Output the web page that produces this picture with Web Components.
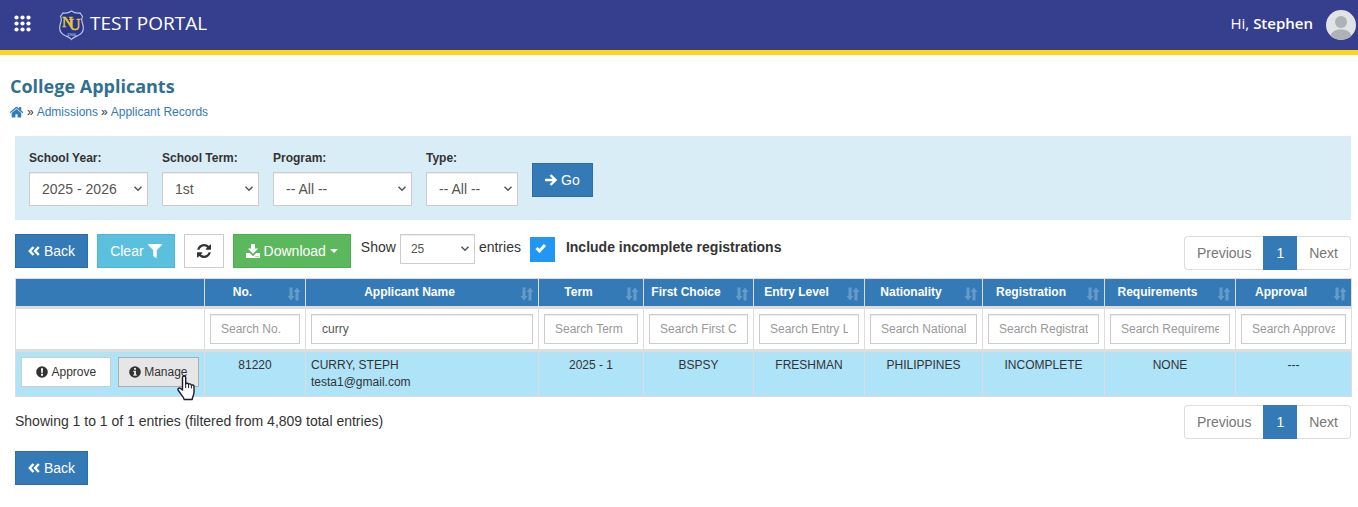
<!DOCTYPE html>
<html lang="en">
<head>
<meta charset="utf-8">
<meta name="viewport" content="width=device-width, initial-scale=1">
<title>College Applicants</title>
<style>
    body{
        margin: 0;
        background: #fff;
        color: #333;
        font-family: "Liberation Sans", Arial, sans-serif;
        font-size: 14px;
        line-height: 20px;
    }
    main{
        display: block;
        padding: 20px 7px 22px 15px;
    }
    .footer{
        display: flex;
        justify-content: space-between;
        align-items: flex-start;
        margin: 8px 0 12px;
    }
    .info{
        padding-top: 6px;
    }
</style>
</head>
<body>
<portal-header user="Stephen">TEST PORTAL</portal-header>
<main>
    <page-heading>College Applicants</page-heading>
    <filter-panel>
        <filter-field label="School Year:" options="2025 - 2026|2024 - 2025" width="119"></filter-field>
        <filter-field label="School Term:" options="1st|2nd|3rd" width="97"></filter-field>
        <filter-field label="Program:" options="-- All --" width="139"></filter-field>
        <filter-field label="Type:" options="-- All --" width="92"></filter-field>
        <action-button slot="action" kind="primary" icon="arrow">Go</action-button>
    </filter-panel>
    <table-toolbar></table-toolbar>
    <applicant-table></applicant-table>
    <div class="footer">
        <span class="info">Showing 1 to 1 of 1 entries (filtered from 4,809 total entries)</span>
        <page-nav></page-nav>
    </div>
    <action-button kind="primary" icon="back">Back</action-button>
</main>

<script>
const ICONS = {
    back: '<svg width="12" height="14" viewBox="0 0 12 14"><path d="M5.500 3 1.800 7 5.500 11M10.800 3 7.100 7 10.800 11" fill="none" stroke="currentColor" stroke-width="2.400"/></svg>',
    arrow: '<svg width="12" height="14" viewBox="0 0 12 14"><path d="M0 7H10.500M5.500 2 10.500 7 5.500 12" fill="none" stroke="currentColor" stroke-width="2.400"/></svg>',
    filter: '<svg width="14" height="14" viewBox="0 0 512 512"><path fill="currentColor" d="M487.976 0H24.028C2.710 0-8.047 25.866 7.058 40.971L192 225.941V432c0 7.831 3.821 15.170 10.237 19.662l80 55.980C298.020 518.690 320 507.493 320 487.980V225.941l184.947-184.970C520.021 25.896 509.338 0 487.976 0z"/></svg>',
    refresh: '<svg width="14" height="14" viewBox="128 128 1536 1536"><path fill="currentColor" d="M1639 1056q0 5-1 7-64 268-268 434.500t-478 166.500q-146 0-282.500-55t-243.500-157l-129 129q-19 19-45 19t-45-19-19-45v-448q0-26 19-45t45-19h448q26 0 45 19t19 45-19 45l-137 137q71 66 161 102t187 36q134 0 250-65t186-179q11-17 53-117 8-23 30-23h192q13 0 22.500 9.500t9.500 22.500zm25-800v448q0 26-19 45t-45 19h-448q-26 0-45-19t-19-45 19-45l138-138q-148-137-349-137-134 0-250 65t-186 179q-11 17-53 117-8 23-30 23h-199q-13 0-22.500-9.500t-9.500-22.500v-7q65-268 270-434.500t480-166.500q146 0 284 55.500t245 156.500l130-129q19-19 45-19t45 19 19 45z"/></svg>',
    download: '<svg width="14" height="14" viewBox="0 0 14 14"><path fill="currentColor" d="M5 0h4v4.500h3.200L7 9.800 1.800 4.500H5z"/><path fill="currentColor" fill-rule="evenodd" d="M0 9h3.700L7 12.200 10.300 9H14v5H0zM9.500 12v1h1v-1zm2 0v1h1v-1z"/></svg>',
    caret: '<svg width="8" height="4" viewBox="0 0 8 4"><path fill="currentColor" d="M0 0h8L4 4z"/></svg>',
    home: '<svg width="14" height="14" viewBox="50 150 1692 1450"><path fill="currentColor" d="M1408 992v480q0 26-19 45t-45 19h-384v-384h-256v384h-384q-26 0-45-19t-19-45v-480q0-1 .500-3t.500-3l575-474 575 474q1 2 1 6zm223-69l-62 74q-8 9-21 11h-3q-13 0-21-7l-692-577-692 577q-12 8-24 7-13-2-21-11l-62-74q-8-10-7-23.500t11-21.500l719-599q32-26 76-26t76 26l244 204v-195q0-14 9-23t23-9h192q14 0 23 9t9 23v408l219 182q10 8 11 21.500t-7 23.500z"/></svg>',
    alert: '<svg width="12" height="12" viewBox="0 0 12 12"><circle cx="6" cy="6" r="5.800" fill="currentColor"/><path d="M5 2.200h2L6.700 6.900H5.300zM5 7.800h2v1.900H5z" fill="#fff"/></svg>',
    info: '<svg width="12" height="12" viewBox="0 0 12 12"><circle cx="6" cy="6" r="5.800" fill="currentColor"/><path d="M5 2h2v1.700H5zM4.300 4.700H7V8.500h.800v1.200H4.300V8.500h.800V5.900h-.800z" fill="#e6e6e6"/></svg>',
    chevron: '<svg width="10" height="6" viewBox="0 0 10 6"><path d="M1.500.8 5 4.300 8.500.8" fill="none" stroke="#555" stroke-width="1.500"/></svg>',
    check: '<svg width="12" height="10" viewBox="0 0 12 10"><path d="M1.500 5 4.500 8 10 2" fill="none" stroke="#fff" stroke-width="3"/></svg>',
    sort: '<svg width="14" height="14" viewBox="0 0 14 14"><path fill="currentColor" d="M2.500.5h3v8.500h2L4 13.500.5 9h2zM8.500 13.500h3V5h2L10 .5 6.500 5h2z"/></svg>',
    grid: '<svg width="17" height="17" viewBox="0 0 17 17" fill="#fff"><circle cx="2.500" cy="2.500" r="2.100"/><circle cx="8.500" cy="2.500" r="2.100"/><circle cx="14.500" cy="2.500" r="2.100"/><circle cx="2.500" cy="8.500" r="2.100"/><circle cx="8.500" cy="8.500" r="2.100"/><circle cx="14.500" cy="8.500" r="2.100"/><circle cx="2.500" cy="14.500" r="2.100"/><circle cx="8.500" cy="14.500" r="2.100"/><circle cx="14.500" cy="14.500" r="2.100"/></svg>',
    avatar: '<svg width="30" height="30" viewBox="0 0 30 30"><defs><clipPath id="disc"><circle cx="15" cy="15" r="15"/></clipPath></defs><g clip-path="url(#disc)"><path fill="#e1e3e5" d="M0 0h30v30H0z"/><circle cx="15" cy="12" r="6" fill="#adb2b6"/><path fill="#adb2b6" d="M4 27c1-5 5-7.500 11-7.500S25 22 26 27v4H4z"/></g></svg>',
    hand: '<svg width="18" height="26" viewBox="0 0 18 26"><path fill="#fff" stroke="#1c1c2b" stroke-width="1.400" stroke-linejoin="round" d="M5.500 15V2.500C5.500.4 8.700.4 8.700 2.500V9c.5-1.200 2.800-1 2.900.5.600-1 2.600-.8 2.800.8.900-.8 2.600-.4 2.600 1.200V17c0 3-1.500 4.500-1.800 7.500H7.200C6.600 21.500 3 18.500 1.200 15.200c-.9-1.700 1.100-3 2.400-1.700z"/><path stroke="#1c1c2b" d="M8.700 9v4M11.600 10v3M14.400 11v2.500"/></svg>'
}

const FIELD_CSS = `
    select, input{
        box-sizing: border-box;
        width: 100%;
        margin: 0;
        border: 1px solid #ccc;
        border-radius: 0;
        background: #fff;
        box-shadow: inset 0 1px 1px rgba(0,0,0,.075);
        color: #555;
        font-family: inherit;
        appearance: none;
    }
    .select{
        position: relative;
        display: block;
    }
    .select svg{
        position: absolute;
        right: 5px;
        top: calc(50% - 3px);
        pointer-events: none;
    }
`

class PortalHeader extends HTMLElement{
    constructor(){
        super()
        this.root = this.attachShadow({mode : 'open'})
        this.render()
    }
    render(){
        this.root.innerHTML = `
            <style>
                :host{
                    display: block;
                    background: #353f8e;
                    border-bottom: 5px solid #ffd51b;
                    color: #fff;
                    font-family: "Open Sans", "Noto Sans", sans-serif;
                }
                header{
                    display: flex;
                    align-items: center;
                    height: 50px;
                    padding: 0 2px 0 14px;
                }
                button{
                    display: flex;
                    margin: 0 27px 4px 0;
                    padding: 0;
                    border: 0;
                    background: none;
                }
                .brand{
                    display: flex;
                    align-items: center;
                    gap: 5px;
                    color: inherit;
                    font-size: 19px;
                    line-height: 46px;
                    margin-bottom: 4px;
                    text-decoration: none;
                }
                .brand svg{
                    margin-top: 4px;
                }
                .user{
                    display: flex;
                    align-items: center;
                    gap: 13px;
                    margin-left: auto;
                    font-size: 15px;
                }
                .user span{
                    margin-bottom: 4px;
                }
                b{
                    font-weight: 600;
                }
            </style>
            <header>
                <button type="button" aria-label="Menu">${ICONS.grid}</button>
                <a class="brand" href="#">
                    <svg width="27" height="31" viewBox="0 0 27 31" aria-hidden="true">
                        <path d="M13.500 1c2.300 1.700 5.300 2.500 8.500 1.900l2.500 3.600c-1.700 2.700-.7 5 .3 8 1.600 5.500-.3 8.900-4.800 11-2.400 1-4.900 1.800-6.500 4-1.600-2.200-4.100-3-6.500-4-4.500-2.100-6.400-5.500-4.800-11 1-3 2-5.300.3-8L5 2.900C8.200 3.500 11.200 2.700 13.500 1z" fill="#27368a" stroke="#b9c3e4" stroke-width="1.200"/>
                        <text fill="#e6c73a" stroke="#e6c73a" stroke-width=".5" font-family="Liberation Serif, serif"><tspan x="4" y="17" font-size="15">N</tspan><tspan x="11" y="20" font-size="16">U</tspan></text>
                        <text x="13.500" y="26" font-size="4" fill="#dde3f5" text-anchor="middle" font-family="Liberation Sans, sans-serif">1900</text>
                    </svg>
                    <slot></slot>
                </a>
                <div class="user"><span>Hi, <b>${this.getAttribute('user')}</b></span>${ICONS.avatar}</div>
            </header>
        `;
    }
}
customElements.define('portal-header', PortalHeader)

class PageHeading extends HTMLElement{
    constructor(){
        super()
        this.root = this.attachShadow({mode : 'open'})
        this.render()
    }
    render(){
        this.root.innerHTML = `
            <style>
                :host{
                    display: block;
                    margin: 0 0 14px -5px;
                }
                h1{
                    margin: 0 0 5px;
                    color: #31708f;
                    font: bold 18px/22px "Open Sans", "Noto Sans", sans-serif;
                }
                nav{
                    display: flex;
                    align-items: center;
                    gap: 3px;
                    font-size: 12px;
                    line-height: 20px;
                }
                a{
                    display: flex;
                    color: #337ab7;
                    text-decoration: none;
                }
            </style>
            <h1><slot></slot></h1>
            <nav>
                <a href="#" aria-label="Home">${ICONS.home}</a><span>»</span>
                <a href="#">Admissions</a><span>»</span>
                <a href="#">Applicant Records</a>
            </nav>
        `;
    }
}
customElements.define('page-heading', PageHeading)

class ActionButton extends HTMLElement{
    constructor(){
        super()
        this.root = this.attachShadow({mode : 'open'})
        this.render()
    }
    icon(name){
        const key = this.getAttribute(name)
        return key ? ICONS[key] : ''
    }
    render(){
        const text = this.textContent.trim()
        this.root.innerHTML = `
            <style>
                :host{
                    display: inline-block;
                    --bg: #fff;
                    --line: #ccc;
                    --ink: #333;
                }
                :host([kind="primary"]){ --bg: #337ab7; --line: #2e6da4; --ink: #fff; }
                :host([kind="info"]){ --bg: #5bc0de; --line: #46b8da; --ink: #fff; }
                :host([kind="success"]){ --bg: #5cb85c; --line: #4cae4c; --ink: #fff; }
                :host([kind="pressed"]){ --bg: #e6e6e6; --line: #adadad; }
                button{
                    display: flex;
                    align-items: center;
                    justify-content: center;
                    gap: 4px;
                    min-height: 34px;
                    margin: 0;
                    padding: 6px 12px;
                    border: 1px solid var(--line);
                    background: var(--bg);
                    color: var(--ink);
                    font: inherit;
                    line-height: 20px;
                    cursor: pointer;
                }
                :host([small]) button{
                    min-height: 30px;
                    padding: 5px 14px;
                    font-size: 12px;
                    line-height: 18px;
                    gap: 3px;
                }
                :host([small][kind="pressed"]) button{
                    padding: 5px 10px;
                }
            </style>
            <button type="button" aria-label="${this.getAttribute('label') || text}">${this.icon('icon')}${text ? '<slot></slot>' : ''}${this.icon('after')}</button>
        `;
    }
}
customElements.define('action-button', ActionButton)

class FilterField extends HTMLElement{
    constructor(){
        super()
        this.root = this.attachShadow({mode : 'open'})
        this.render()
    }
    render(){
        const options = this.getAttribute('options').split('|')
        this.root.innerHTML = `
            <style>
                ${FIELD_CSS}
                :host{
                    display: block;
                    width: ${this.getAttribute('width')}px;
                }
                label{
                    display: block;
                    margin-bottom: 5px;
                    font-size: 12px;
                    font-weight: bold;
                    line-height: 17px;
                    white-space: nowrap;
                }
                select{
                    height: 34px;
                    padding: 0 12px;
                    font-size: 14px;
                }
            </style>
            <label for="field">${this.getAttribute('label')}</label>
            <span class="select">
                <select id="field">${options.map(o => `<option>${o}</option>`).join('')}</select>${ICONS.chevron}
            </span>
        `;
    }
}
customElements.define('filter-field', FilterField)

class FilterPanel extends HTMLElement{
    constructor(){
        super()
        this.root = this.attachShadow({mode : 'open'})
        this.render()
    }
    render(){
        this.root.innerHTML = `
            <style>
                :host{
                    display: flex;
                    flex-wrap: wrap;
                    align-items: center;
                    gap: 14px;
                    padding: 14px;
                    background: #d9edf7;
                }
                .action{
                    display: flex;
                    padding-top: 4px;
                }
                ::slotted(filter-field){
                    flex: none;
                }
            </style>
            <slot></slot>
            <div class="action"><slot name="action"></slot></div>
        `;
    }
}
customElements.define('filter-panel', FilterPanel)

class PageNav extends HTMLElement{
    constructor(){
        super()
        this.root = this.attachShadow({mode : 'open'})
        this.render()
    }
    render(){
        this.root.innerHTML = `
            <style>
                :host{
                    display: block;
                }
                ul{
                    display: flex;
                    margin: 0;
                    padding: 0;
                    list-style: none;
                }
                a{
                    display: block;
                    padding: 6px 12px;
                    border: 1px solid #ddd;
                    background: #fff;
                    color: #777;
                    text-decoration: none;
                }
                .prev a{
                    border-right: 0;
                    border-radius: 4px 0 0 4px;
                }
                .next a{
                    border-left: 0;
                    border-radius: 0 4px 4px 0;
                }
                .active a{
                    border-color: #337ab7;
                    background: #337ab7;
                    color: #fff;
                }
            </style>
            <ul>
                <li class="prev"><a href="#">Previous</a></li>
                <li class="active"><a href="#" aria-current="page">1</a></li>
                <li class="next"><a href="#">Next</a></li>
            </ul>
        `;
    }
}
customElements.define('page-nav', PageNav)

class TableToolbar extends HTMLElement{
    constructor(){
        super()
        this.root = this.attachShadow({mode : 'open'})
        this.render()
    }
    render(){
        this.root.innerHTML = `
            <style>
                ${FIELD_CSS}
                :host{
                    display: flex;
                    flex-wrap: wrap;
                    align-items: flex-start;
                    gap: 9px;
                    margin: 14px 0 8px;
                }
                label{
                    display: flex;
                    line-height: 26px;
                }
                .length{
                    gap: 4px;
                    margin-left: 1px;
                }
                .length .select{
                    width: 75px;
                }
                .length select{
                    height: 30px;
                    padding: 0 10px;
                    font-size: 12px;
                }
                .include{
                    gap: 11px;
                    font-weight: bold;
                }
                .box{
                    display: grid;
                    margin-top: 3px;
                }
                .box > *{
                    grid-area: 1 / 1;
                    place-self: center;
                }
                .box input{
                    width: 25px;
                    height: 25px;
                    border: 0;
                    background: #2196f3;
                    box-shadow: none;
                }
                .box svg{
                    margin: 0 2px 4px 0;
                    pointer-events: none;
                }
                page-nav{
                    margin: 2px 0 0 auto;
                }
            </style>
            <action-button kind="primary" icon="back">Back</action-button>
            <action-button kind="info" after="filter">Clear</action-button>
            <action-button icon="refresh" label="Refresh"></action-button>
            <action-button kind="success" icon="download" after="caret">Download</action-button>
            <label class="length">Show
                <span class="select"><select><option>25</option><option>50</option><option>100</option></select>${ICONS.chevron}</span>
                entries</label>
            <label class="include"><span class="box"><input type="checkbox" checked>${ICONS.check}</span>Include incomplete registrations</label>
            <page-nav></page-nav>
        `;
    }
}
customElements.define('table-toolbar', TableToolbar)

const COLUMNS = [
    { title: 'No.', width: 101 },
    { title: 'Applicant Name', width: 233, value: 'curry' },
    { title: 'Term', width: 105 },
    { title: 'First Choice', width: 110 },
    { title: 'Entry Level', width: 111 },
    { title: 'Nationality', width: 118 },
    { title: 'Registration', width: 122 },
    { title: 'Requirements', width: 131 },
    { title: 'Approval', width: 116 }
]
const APPLICANT = ['81220', 'CURRY, STEPH<br>testa1@gmail.com', '2025 - 1', 'BSPSY', 'FRESHMAN', 'PHILIPPINES', 'INCOMPLETE', 'NONE', '---']

class ApplicantTable extends HTMLElement{
    constructor(){
        super()
        this.root = this.attachShadow({mode : 'open'})
        this.render()
    }
    render(){
        this.root.innerHTML = `
            <style>
                ${FIELD_CSS}
                :host{
                    display: block;
                    font-size: 12px;
                    line-height: 17px;
                }
                table{
                    width: 100%;
                    border-collapse: collapse;
                    table-layout: fixed;
                }
                th, td{
                    border: 1px solid #ddd;
                    padding: 5px;
                }
                thead th{
                    position: relative;
                    padding: 5px 30px 5px 5px;
                    background: #337ab7;
                    color: #fff;
                    white-space: nowrap;
                }
                thead svg{
                    position: absolute;
                    right: 4px;
                    bottom: 5px;
                    opacity: .25;
                }
                .search td{
                    border-top: 3px solid #ddd;
                    border-bottom: 3px solid #ddd;
                }
                input{
                    display: block;
                    height: 30px;
                    padding: 5px 10px;
                    font-size: 12px;
                }
                input::placeholder{
                    color: #999;
                }
                .row td{
                    height: 34px;
                    background: #aee3f8;
                    text-align: center;
                    vertical-align: top;
                }
                .row .name{
                    text-align: left;
                }
                .actions{
                    display: flex;
                    justify-content: center;
                    gap: 7px;
                }
                .manage{
                    position: relative;
                }
                .pointer{
                    position: absolute;
                    right: 4px;
                    top: 18px;
                    pointer-events: none;
                }
            </style>
            <table>
                <colgroup><col style="width: 189px">${COLUMNS.map(c => `<col style="width: ${c.width}px">`).join('')}</colgroup>
                <thead>
                    <tr><th></th>${COLUMNS.map(c => `<th>${c.title}${ICONS.sort}</th>`).join('')}</tr>
                </thead>
                <tbody>
                    <tr class="search"><td></td>${COLUMNS.map(c => `<td><input type="text" aria-label="Search ${c.title}" placeholder="Search ${c.title}" value="${c.value || ''}"></td>`).join('')}</tr>
                    <tr class="row">
                        <td>
                            <div class="actions">
                                <action-button small icon="alert">Approve</action-button>
                                <span class="manage"><action-button small kind="pressed" icon="info">Manage</action-button><span class="pointer">${ICONS.hand}</span></span>
                            </div>
                        </td>
                        ${APPLICANT.map((v, i) => `<td class="${i === 1 ? 'name' : ''}">${v}</td>`).join('')}
                    </tr>
                </tbody>
            </table>
        `;
    }
}
customElements.define('applicant-table', ApplicantTable)
</script>
</body>
</html>
